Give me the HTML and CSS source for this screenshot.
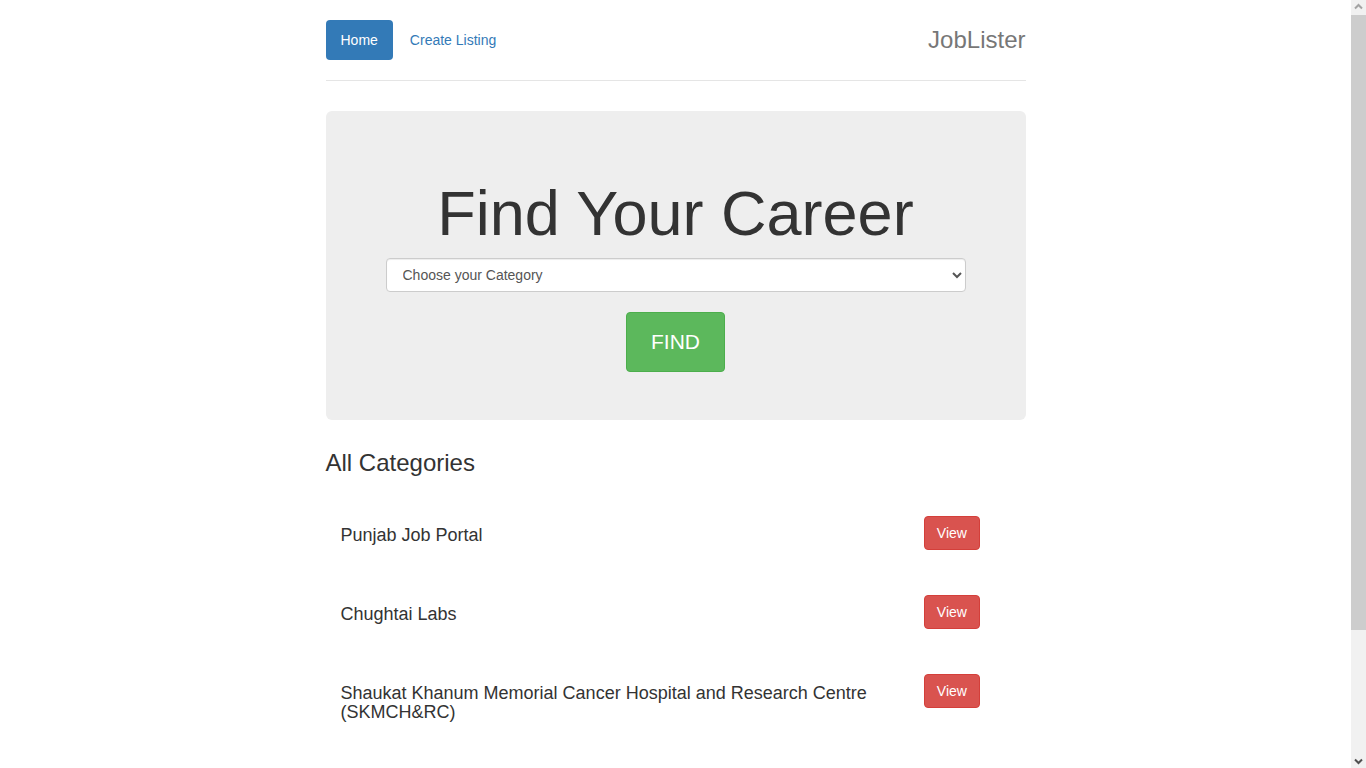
FILE: index.html
```html
<!DOCTYPE html>
<html lang="en">
<head>
<meta charset="utf-8">
<title>JobLister</title>
<link rel="stylesheet" href="styles.css">
</head>
<body>
<div class="container">
  <header class="header">
    <nav>
      <ul class="pills">
        <li><a class="pill active" href="#">Home</a></li>
        <li><a class="pill" href="#">Create Listing</a></li>
      </ul>
    </nav>
    <h3 class="brand">JobLister</h3>
  </header>

  <section class="jumbotron">
    <h1>Find Your Career</h1>
    <form class="search">
      <select class="form-control">
        <option>Choose your Category</option>
      </select>
      <button type="button" class="btn-find">FIND</button>
    </form>
  </section>

  <h3 class="section-title">All Categories</h3>

  <div class="categories">
    <div class="cat-row">
      <div class="cat-name"><h4>Punjab Job Portal</h4></div>
      <div class="cat-action"><a class="btn-view" href="#">View</a></div>
    </div>
    <div class="cat-row">
      <div class="cat-name"><h4>Chughtai Labs</h4></div>
      <div class="cat-action"><a class="btn-view" href="#">View</a></div>
    </div>
    <div class="cat-row">
      <div class="cat-name"><h4>Shaukat Khanum Memorial Cancer Hospital and Research Centre (SKMCH&amp;RC)</h4></div>
      <div class="cat-action"><a class="btn-view" href="#">View</a></div>
    </div>
  </div>
</div>

<div class="scrollbar" aria-hidden="true">
  <div class="sb-btn">
    <svg width="15" height="15" viewBox="0 0 15 15"><path d="M4 8.5 L7.5 5 L11 8.5" fill="none" stroke="#a3a3a3" stroke-width="2"/></svg>
  </div>
  <div class="sb-track"><div class="sb-thumb"></div></div>
  <div class="sb-btn">
    <svg width="15" height="15" viewBox="0 0 15 15"><path d="M4 6.5 L7.5 10 L11 6.5" fill="none" stroke="#505050" stroke-width="2"/></svg>
  </div>
</div>
</body>
</html>
```

FILE: styles.css
```css
* { box-sizing: border-box; }

html, body { margin: 0; }

body {
  font-family: "Liberation Sans", Arial, Helvetica, sans-serif;
  font-size: 14px;
  line-height: 1.42857;
  color: #333;
  background: #fff;
  padding-top: 20px;
  padding-bottom: 20px;
  margin-right: 15px;
}

.container {
  width: 730px;
  margin: 0 auto;
  padding: 0 15px;
}

.header {
  display: flex;
  justify-content: space-between;
  align-items: flex-start;
  padding-bottom: 20px;
  border-bottom: 1px solid #e5e5e5;
  margin-bottom: 30px;
}

.pills {
  list-style: none;
  margin: 0;
  padding: 0;
  display: flex;
  gap: 2px;
}

.pill {
  display: block;
  padding: 10px 15px;
  line-height: 20px;
  border-radius: 4px;
  color: #337ab7;
  text-decoration: none;
}

.pill.active {
  background: #337ab7;
  color: #fff;
}

.brand {
  margin: 0;
  font-size: 24px;
  font-weight: 500;
  line-height: 40px;
  color: #777;
}

.jumbotron {
  background: #eee;
  border-radius: 6px;
  padding: 48px 60px;
  text-align: center;
  margin-bottom: 30px;
}

.jumbotron h1 {
  margin: 20px 0 10px;
  font-size: 63px;
  font-weight: 500;
  line-height: 1.1;
  color: #333;
}

.search {
  display: flex;
  flex-direction: column;
  align-items: center;
  gap: 20px;
}

.form-control {
  display: block;
  width: 100%;
  height: 34px;
  padding: 6px 12px;
  font-family: inherit;
  font-size: 14px;
  line-height: 1.42857;
  color: #555;
  background: #fff;
  border: 1px solid #ccc;
  border-radius: 4px;
  box-shadow: inset 0 1px 1px rgba(0,0,0,.075);
}

.btn-find {
  font-family: inherit;
  font-size: 21px;
  line-height: 28px;
  padding: 15px 24px;
  color: #fff;
  background: #5cb85c;
  border: 1px solid #4cae4c;
  border-radius: 4px;
  cursor: pointer;
}

.section-title {
  margin: 30px 0 10px;
  font-size: 24px;
  font-weight: 500;
  line-height: 26px;
}

.categories {
  display: flex;
  flex-direction: column;
  gap: 39px;
  padding-top: 29px;
  padding-bottom: 110px;
}

.cat-row {
  display: flex;
  align-items: flex-start;
}

.cat-name {
  width: 583.33px;
  padding: 0 15px;
}

.cat-name h4 {
  margin: 11px 0 10px;
  font-size: 18px;
  font-weight: 500;
  line-height: 19px;
}

.cat-action {
  padding: 1px 15px 0;
}

.btn-view {
  display: inline-block;
  padding: 6px 12px;
  font-size: 14px;
  line-height: 20px;
  color: #fff;
  background: #d9534f;
  border: 1px solid #d43f3a;
  border-radius: 4px;
  text-decoration: none;
}

.scrollbar {
  position: fixed;
  top: 0;
  right: 0;
  width: 15px;
  height: 100vh;
  background: #f1f1f1;
  display: flex;
  flex-direction: column;
}

.sb-btn {
  height: 15px;
  flex: none;
}

.sb-btn svg { display: block; }

.sb-track {
  flex: 1;
}

.sb-thumb {
  height: 615px;
  background: #cdcdcd;
}
```
